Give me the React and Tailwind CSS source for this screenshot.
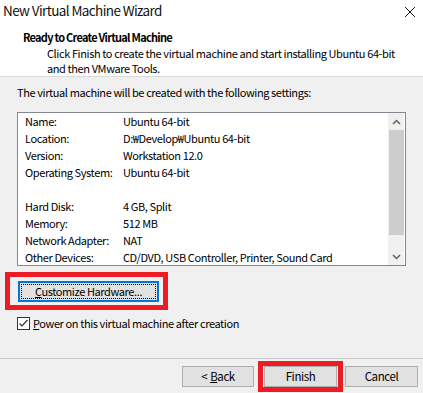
import React from 'react';

const settings = [
  ['Name:', 'Ubuntu 64-bit'],
  ['Location:', 'D:\u20A9Develop\u20A9Ubuntu 64-bit'],
  ['Version:', 'Workstation 12.0'],
  ['Operating System:', 'Ubuntu 64-bit'],
  null,
  ['Hard Disk:', '4 GB, Split'],
  ['Memory:', '512 MB'],
  ['Network Adapter:', 'NAT'],
  ['Other Devices:', 'CD/DVD, USB Controller, Printer, Sound Card'],
];

const WinButton = ({ children, className = '' }) => (
  <div
    className={`h-[21px] flex items-center justify-center bg-[#e1e1e1] border border-[#adadad] text-[11.5px] leading-none text-black ${className}`}
  >
    {children}
  </div>
);

const App = () => {
  return (
    <div
      className="w-[423px] h-[393px] overflow-hidden bg-[#f0f0f0] flex flex-col text-black whitespace-nowrap tracking-[-0.4px]"
      style={{ fontFamily: '"Noto Sans CJK KR", "Noto Sans", sans-serif' }}
    >
      {/* Title bar + header */}
      <div className="bg-white h-[77px] border-b border-[#dadada] flex flex-col">
        <div className="h-[22px] flex items-center justify-between pl-[3px] pr-[7px]">
          <span className="text-[13.5px] leading-none tracking-[-0.6px] text-[#111]">New Virtual Machine Wizard</span>
          <svg width="12" height="12" viewBox="0 0 12 12" className="mt-[1px]">
            <path d="M1 1 L11 11 M11 1 L1 11" stroke="#111" strokeWidth="1" />
          </svg>
        </div>
        <div className="pl-[23px] pt-[8px]">
          <div className="text-[11px] font-bold leading-[15px] tracking-[-0.75px]">Ready to Create Virtual Machine</div>
          <div className="pl-[24px] text-[11px] leading-[15px] mt-[1px]">
            Click Finish to create the virtual machine and start installing Ubuntu 64-bit
            <br />
            and then VMware Tools.
          </div>
        </div>
      </div>

      {/* Body */}
      <div className="flex-1 flex flex-col px-[17px] text-[11px]">
        <div className="leading-[15px] mt-[8px]">
          The virtual machine will be created with the following settings:
        </div>

        <div className="mt-[12px] h-[154px] bg-white border border-[#828790] flex">
          <div className="flex-1 pl-[7px]">
            {settings.map((row, idx) =>
              row ? (
                <div key={idx} className="flex h-[17px] items-center">
                  <span className="w-[98px] shrink-0">{row[0]}</span>
                  <span>{row[1]}</span>
                </div>
              ) : (
                <div key={idx} className="h-[17px]" />
              )
            )}
          </div>
          {/* Scrollbar */}
          <div className="w-[16px] mr-[1px] bg-[#f0f0f0] flex flex-col items-center">
            <div className="h-[17px] flex items-center justify-center">
              <svg width="9" height="6" viewBox="0 0 9 6">
                <path d="M1 5 L4.5 1.5 L8 5" stroke="#606060" strokeWidth="1.5" fill="none" />
              </svg>
            </div>
            <div className="w-[15px] h-[105px] bg-[#cdcdcd]" />
            <div className="flex-1" />
            <div className="h-[17px] flex items-center justify-center">
              <svg width="9" height="6" viewBox="0 0 9 6">
                <path d="M1 1 L4.5 4.5 L8 1" stroke="#606060" strokeWidth="1.5" fill="none" />
              </svg>
            </div>
          </div>
        </div>

        {/* Customize hardware (highlighted) */}
        <div className="mt-[6px] -ml-[12px] w-[163px] h-[38px] border-[5px] border-[#ed1c24] pl-[8px] pt-[4px]">
          <div className="w-[141px] h-[21px] border-2 border-[#0078d7] bg-[#e1e1e1] p-[1px]">
            <div className="w-full h-full border border-dotted border-black flex items-center justify-center text-[11px] leading-none">
              <span>
                <span className="underline">C</span>ustomize Hardware...
              </span>
            </div>
          </div>
        </div>

        {/* Power on checkbox */}
        <div className="mt-[6px] flex items-center">
          <div className="w-[13px] h-[13px] border border-[#333] bg-white flex items-center justify-center">
            <svg width="11" height="11" viewBox="0 0 11 11">
              <path d="M1.5 5.5 L4 8 L9.5 2" stroke="#333" strokeWidth="1.2" fill="none" />
            </svg>
          </div>
          <span className="ml-[3px] leading-[15px]">
            <span className="underline">P</span>ower on this virtual machine after creation
          </span>
        </div>
      </div>

      {/* Footer */}
      <div className="h-[35px] border-t border-[#c8c8c8] flex items-start justify-end pr-[5px] pt-[2px]">
        <WinButton className="w-[72px] mt-[5px]">
          &lt; <span className="underline ml-[3px]">B</span>ack
        </WinButton>
        <div className="ml-[4px] border-[5px] border-[#ed1c24] px-[1px]">
          <WinButton className="w-[73px]">Finish</WinButton>
        </div>
        <WinButton className="w-[73px] mt-[5px] ml-[2px]">Cancel</WinButton>
      </div>
    </div>
  );
};

export default App;
